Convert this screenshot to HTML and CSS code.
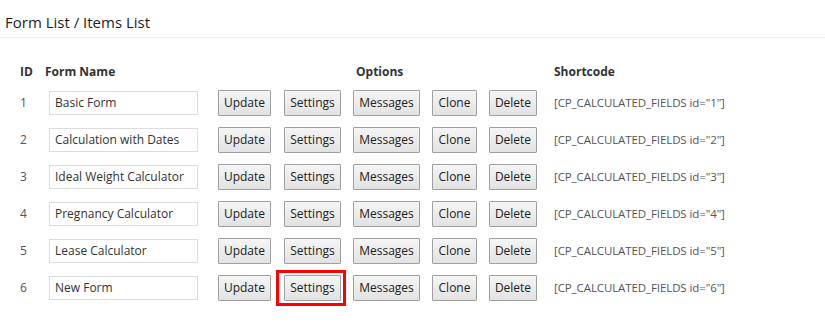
FILE: index.html
```html
<!DOCTYPE html>
<html lang="en">
<head>
    <meta charset="UTF-8">
    <title>Form List</title>
    <link rel="stylesheet" href="styles.css">
</head>
<body>
<div id="app">
    <h2 class="title">Form List / Items List</h2>
    <div class="list">
        <div class="row head">
            <div class="id">ID</div>
            <div class="name">Form Name</div>
            <div class="options">Options</div>
            <div class="code">Shortcode</div>
        </div>
        <div class="row">
            <div class="id">1</div>
            <div class="name"><input type="text" value="Basic Form"></div>
            <div class="btns">
                <button class="b-update">Update</button>
                <button class="b-settings">Settings</button>
                <button class="b-messages">Messages</button>
                <button class="b-clone">Clone</button>
                <button class="b-delete">Delete</button>
            </div>
            <div class="code">[CP_CALCULATED_FIELDS id="1"]</div>
        </div>
        <div class="row">
            <div class="id">2</div>
            <div class="name"><input type="text" value="Calculation with Dates"></div>
            <div class="btns">
                <button class="b-update">Update</button>
                <button class="b-settings">Settings</button>
                <button class="b-messages">Messages</button>
                <button class="b-clone">Clone</button>
                <button class="b-delete">Delete</button>
            </div>
            <div class="code">[CP_CALCULATED_FIELDS id="2"]</div>
        </div>
        <div class="row">
            <div class="id">3</div>
            <div class="name"><input type="text" value="Ideal Weight Calculator"></div>
            <div class="btns">
                <button class="b-update">Update</button>
                <button class="b-settings">Settings</button>
                <button class="b-messages">Messages</button>
                <button class="b-clone">Clone</button>
                <button class="b-delete">Delete</button>
            </div>
            <div class="code">[CP_CALCULATED_FIELDS id="3"]</div>
        </div>
        <div class="row">
            <div class="id">4</div>
            <div class="name"><input type="text" value="Pregnancy Calculator"></div>
            <div class="btns">
                <button class="b-update">Update</button>
                <button class="b-settings">Settings</button>
                <button class="b-messages">Messages</button>
                <button class="b-clone">Clone</button>
                <button class="b-delete">Delete</button>
            </div>
            <div class="code">[CP_CALCULATED_FIELDS id="4"]</div>
        </div>
        <div class="row">
            <div class="id">5</div>
            <div class="name"><input type="text" value="Lease Calculator"></div>
            <div class="btns">
                <button class="b-update">Update</button>
                <button class="b-settings">Settings</button>
                <button class="b-messages">Messages</button>
                <button class="b-clone">Clone</button>
                <button class="b-delete">Delete</button>
            </div>
            <div class="code">[CP_CALCULATED_FIELDS id="5"]</div>
        </div>
        <div class="row">
            <div class="id">6</div>
            <div class="name"><input type="text" value="New Form"></div>
            <div class="btns">
                <button class="b-update">Update</button>
                <span class="mark"><button class="b-settings">Settings</button></span>
                <button class="b-messages">Messages</button>
                <button class="b-clone">Clone</button>
                <button class="b-delete">Delete</button>
            </div>
            <div class="code">[CP_CALCULATED_FIELDS id="6"]</div>
        </div>
    </div>
</div>
</body>
</html>
```
FILE: styles.css
```css
*{
    margin: 0;
    padding: 0;
    box-sizing: border-box;
}
body{
    font-family: "Open Sans", Arial, sans-serif;
    font-size: 12px;
    color: #333;
    background: #fff;
}
.title{
    font-size: 15px;
    font-weight: normal;
    color: #1e1e1e;
    height: 38px;
    line-height: 44px;
    padding-left: 5px;
    border-bottom: 1px solid #eee;
}
.list{
    padding: 20px 0 0 20px;
}
.row{
    display: flex;
    align-items: center;
    height: 37px;
    color: #555;
}
.row.head{
    height: 26px;
    font-weight: bold;
    color: #333;
}
.id{
    width: 25px;
}
.name{
    width: 173px;
}
.head .name{
    width: 311px;
}
.head .options{
    width: 198px;
}
.name input{
    width: 149px;
    height: 24px;
    margin-left: 4px;
    border: 1px solid #ddd;
    padding: 0 5px;
    font: inherit;
    color: #333;
    outline: none;
}
.btns{
    display: flex;
    align-items: center;
    width: 336px;
}
button{
    height: 26px;
    border: 1px solid #a0a0a0;
    border-radius: 1px;
    background: linear-gradient(#f5f5f5, #e2e2e2);
    font: inherit;
    color: #222;
    margin-right: 12px;
    padding: 0;
}
.b-update{ width: 53px; margin-right: 13px; }
.b-settings{ width: 57px; }
.b-messages{ width: 67px; }
.b-clone{ width: 45px; }
.b-delete{ width: 48px; margin-right: 0; }
.mark{
    display: flex;
    margin: -5px 7px -5px -8px;
    padding: 2px 2px 2px 5px;
    border: 3px solid #f00;
}
.mark button{
    margin-right: 0;
}
.code{
    font-size: 11.5px;
    letter-spacing: -0.1px;
}
.head .code{
    font-size: 12px;
    letter-spacing: 0;
}
```
